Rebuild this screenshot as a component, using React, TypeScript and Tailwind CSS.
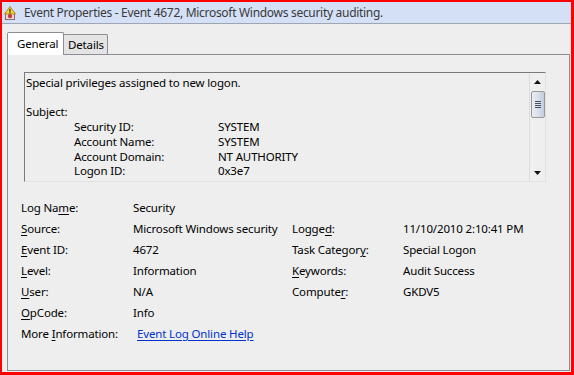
import React from "react";

function TitleIcon() {
  return (
    <svg width="12" height="14" viewBox="0 0 12 14">
      <rect x="1.5" y="6.5" width="9" height="7" fill="#e9d6d6" stroke="#8a6a6a" />
      <circle cx="6" cy="10" r="2.2" fill="#d23b3b" />
      <polygon points="6,0.5 11.5,8 0.5,8" fill="#f6d23a" stroke="#a77d12" strokeWidth="0.8" />
      <rect x="5.4" y="2.8" width="1.2" height="3" fill="#222" />
      <rect x="5.4" y="6.3" width="1.2" height="1.1" fill="#222" />
    </svg>
  );
}

function U({ children }: { children: React.ReactNode }) {
  return <span className="underline underline-offset-[2px]">{children}</span>;
}

function ScrollBar() {
  return (
    <div className="w-[16px] h-full flex flex-col bg-[#efefef] border-l border-[#dcdcdc]">
      <div className="h-[17px] flex items-center justify-center">
        <svg width="7" height="4" viewBox="0 0 7 4">
          <polygon points="3.5,0 7,4 0,4" fill="#111" />
        </svg>
      </div>
      <div className="mt-[1px] mx-auto w-[14px] h-[27px] rounded-[2px] border border-[#979797] bg-gradient-to-r from-[#e9edf3] via-[#d9e0ea] to-[#c4cddc] flex flex-col items-center justify-center gap-[1px]">
        <div className="w-[6px] h-[1px] bg-[#4a4f5a]" />
        <div className="w-[6px] h-[1px] bg-[#4a4f5a]" />
        <div className="w-[6px] h-[1px] bg-[#4a4f5a]" />
        <div className="w-[6px] h-[1px] bg-[#4a4f5a]" />
      </div>
      <div className="flex-1" />
      <div className="h-[17px] flex items-center justify-center">
        <svg width="7" height="4" viewBox="0 0 7 4">
          <polygon points="0,0 7,0 3.5,4" fill="#111" />
        </svg>
      </div>
    </div>
  );
}

export default function App() {
  const sub = [
    ["Security ID:", "SYSTEM"],
    ["Account Name:", "SYSTEM"],
    ["Account Domain:", "NT AUTHORITY"],
    ["Logon ID:", "0x3e7"],
  ];
  return (
    <div className="w-[574px] h-[375px] overflow-hidden bg-[#ff0000] pl-[2px] pt-[2px] pr-[3px] pb-[3px] font-['Noto_Sans',sans-serif] text-black">
      <div className="w-full h-full flex flex-col bg-[#eeeeee]">
        <div className="h-[22px] shrink-0 flex items-center pl-[2px] bg-[#d4e0f5] border-b border-[#9ea6b2]">
          <TitleIcon />
          <span className="ml-[8px] text-[12px] tracking-[-0.3px] text-[#3a3a3a] leading-none">
            Event Properties - Event 4672, Microsoft Windows security auditing.
          </span>
        </div>
        <div className="flex-1 flex flex-col pl-[5px] pr-[1px] pt-[8px] pb-[1px] text-[11.5px] tracking-[-0.15px]">
          <div className="flex items-end h-[22px] shrink-0">
            <div className="relative z-10 w-[57px] h-[23px] mb-[-1px] pl-[9px] flex items-center bg-white border-l border-t border-r border-[#8c8e94] rounded-t-[2px]">
              General
            </div>
            <div className="w-[45px] h-[20px] ml-[-1px] pl-[4px] flex items-center bg-[#e4e4e4] border-l border-t border-r border-[#8c8e94] rounded-t-[2px]">
              Details
            </div>
          </div>
          <div className="flex-1 border border-[#8c8e94] pl-[13px] pt-[17px]">
            <div className="ml-[3px] w-[522px] h-[110px] flex border-t border-l border-[#7a7a7a] border-r border-b border-r-[#e2e2e2] border-b-[#e2e2e2] overflow-hidden">
              <div className="flex-1 pl-[1px] pt-[3px] leading-[14.7px] overflow-hidden">
                <div>Special privileges assigned to new logon.</div>
                <div>&nbsp;</div>
                <div>Subject:</div>
                {sub.map(([k, v]) => (
                  <div key={k} className="grid grid-cols-[144px_1fr] pl-[48px]">
                    <span>{k}</span>
                    <span>{v}</span>
                  </div>
                ))}
              </div>
              <ScrollBar />
            </div>
            <div className="mt-[15px] grid grid-cols-[112px_159px_111px_1fr] auto-rows-[21px] items-center">
              <span>Log Na<U>m</U>e:</span>
              <span>Security</span>
              <span />
              <span />

              <span><U>S</U>ource:</span>
              <span>Microsoft Windows security</span>
              <span>Logge<U>d</U>:</span>
              <span>11/10/2010 2:10:41 PM</span>

              <span><U>E</U>vent ID:</span>
              <span>4672</span>
              <span>Task Categor<U>y</U>:</span>
              <span>Special Logon</span>

              <span><U>L</U>evel:</span>
              <span>Information</span>
              <span><U>K</U>eywords:</span>
              <span>Audit Success</span>

              <span><U>U</U>ser:</span>
              <span>N/A</span>
              <span>Compute<U>r</U>:</span>
              <span>GKDV5</span>

              <span><U>O</U>pCode:</span>
              <span>Info</span>
              <span />
              <span />

              <span>More <U>I</U>nformation:</span>
              <span className="pl-[4px]">
                <span className="text-[#0033cc] underline underline-offset-[2px]">Event Log Online Help</span>
              </span>
              <span />
              <span />
            </div>
          </div>
        </div>
      </div>
    </div>
  );
}
